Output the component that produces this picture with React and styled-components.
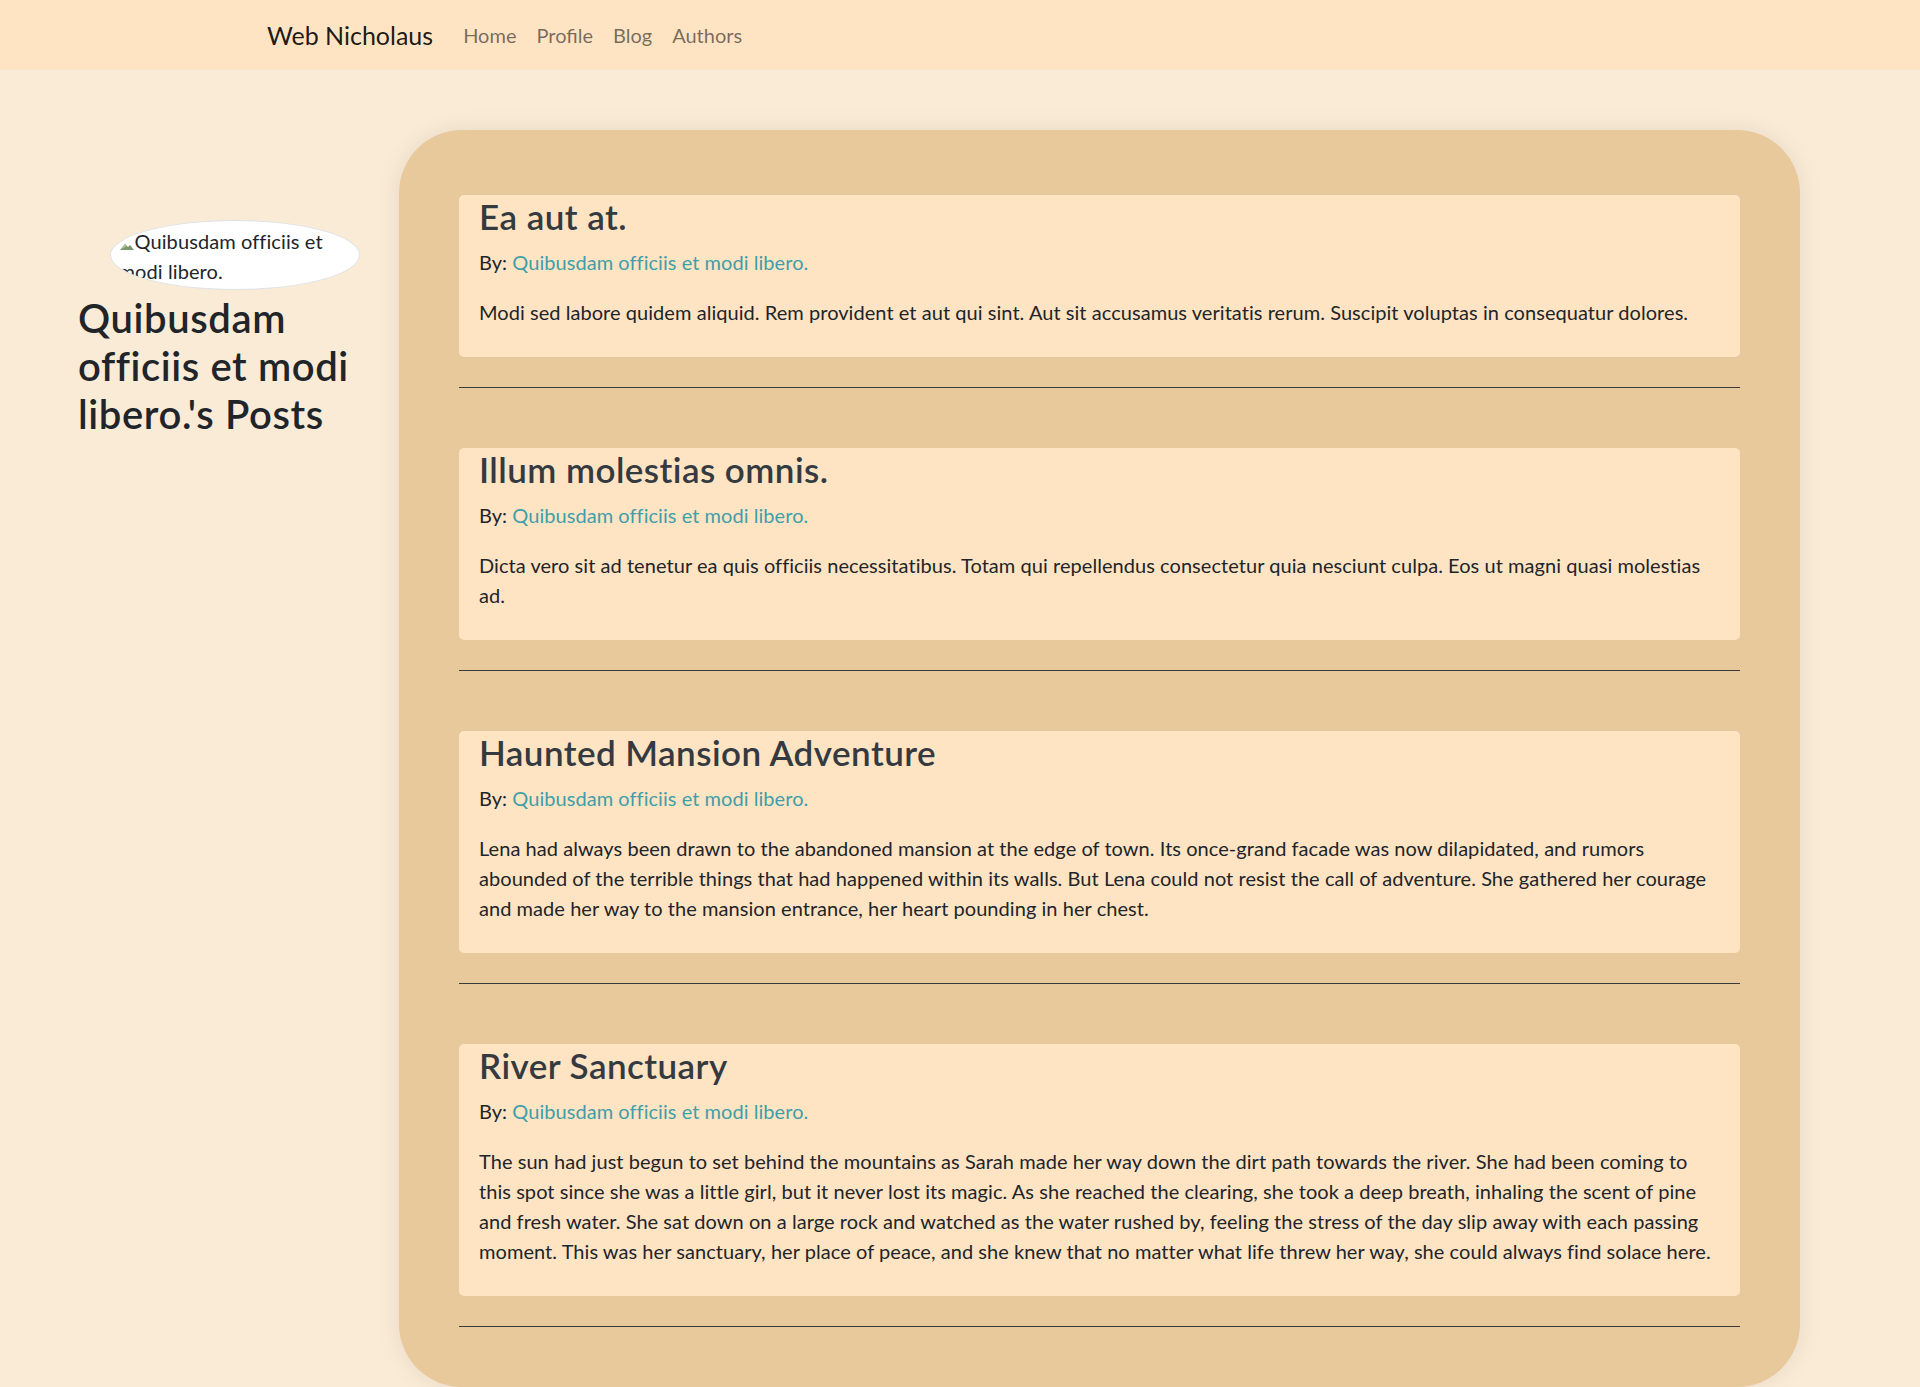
import styled, { createGlobalStyle } from "styled-components";

const posts = [
  {
    id: 1,
    title: "Ea aut at.",
    body: "Modi sed labore quidem aliquid. Rem provident et aut qui sint. Aut sit accusamus veritatis rerum. Suscipit voluptas in consequatur dolores.",
  },
  {
    id: 2,
    title: "Illum molestias omnis.",
    body: "Dicta vero sit ad tenetur ea quis officiis necessitatibus. Totam qui repellendus consectetur quia nesciunt culpa. Eos ut magni quasi molestias ad.",
  },
  {
    id: 3,
    title: "Haunted Mansion Adventure",
    body: "Lena had always been drawn to the abandoned mansion at the edge of town. Its once-grand facade was now dilapidated, and rumors abounded of the terrible things that had happened within its walls. But Lena could not resist the call of adventure. She gathered her courage and made her way to the mansion entrance, her heart pounding in her chest.",
  },
  {
    id: 4,
    title: "River Sanctuary",
    body: "The sun had just begun to set behind the mountains as Sarah made her way down the dirt path towards the river. She had been coming to this spot since she was a little girl, but it never lost its magic. As she reached the clearing, she took a deep breath, inhaling the scent of pine and fresh water. She sat down on a large rock and watched as the water rushed by, feeling the stress of the day slip away with each passing moment. This was her sanctuary, her place of peace, and she knew that no matter what life threw her way, she could always find solace here.",
  },
];

const author = "Quibusdam officiis et modi libero.";

export default function App() {
  return (
    <>
      <GlobalStyle />
      <Navbar>
        <Brand href="#">Web Nicholaus</Brand>
        <NavLink href="#">Home</NavLink>
        <NavLink href="#">Profile</NavLink>
        <NavLink href="#">Blog</NavLink>
        <NavLink href="#">Authors</NavLink>
      </Navbar>

      <Main>
        {/* autor */}
        <Sidebar>
          <Avatar>
            <BrokenIcon viewBox="0 0 16 16">
              <path d="M1 15 L6 9 L9 12 L11 10 L15 15 Z" fill="#7a9a6a" />
              <path d="M1 15 L6 9 L8 11 Z" fill="#a9c29a" />
            </BrokenIcon>
            {author}
          </Avatar>
          <AuthorTitle>{author}'s Posts</AuthorTitle>
        </Sidebar>

        {/* posts */}
        <Panel>
          {posts.map((post) => (
            <div key={post.id}>
              <Card>
                <PostTitle>{post.title}</PostTitle>
                <ByLine>
                  By: <AuthorLink href="#">{author}</AuthorLink>
                </ByLine>
                <Body>{post.body}</Body>
              </Card>
              <Divider />
            </div>
          ))}
        </Panel>
      </Main>
    </>
  );
}

const GlobalStyle = createGlobalStyle`
  body {
    margin: 0;
    background-color: #faebd7;
    color: #212529;
    font-family: Lato, "Open Sans", sans-serif;
    font-size: 20px;
    line-height: 30px;
  }
`;

const Navbar = styled.nav`
  display: flex;
  align-items: center;
  height: 70px;
  padding-left: 267px;
  background-color: #ffe4c4;
`;
const Brand = styled.a`
  margin-right: 20px;
  font-size: 25px;
  color: rgba(0, 0, 0, 0.9);
  text-decoration: none;
`;
const NavLink = styled.a`
  padding: 0 10px;
  font-size: 20px;
  color: rgba(0, 0, 0, 0.55);
  text-decoration: none;
`;

const Main = styled.div`
  display: flex;
  align-items: flex-start;
  padding-top: 60px;
`;
const Sidebar = styled.aside`
  width: 313px;
  padding: 90px 8px 0 78px;
  flex-shrink: 0;
  display: flex;
  flex-direction: column;
  align-items: center;
`;
const Avatar = styled.div`
  box-sizing: border-box;
  width: 250px;
  height: 70px;
  padding: 5px 8px 0 8px;
  background-color: #fff;
  border: 1px solid #dee2e6;
  border-radius: 50%;
  overflow: hidden;
  font-size: 20px;
  line-height: 30px;
  letter-spacing: 0.1px;
  color: #212529;
`;
const BrokenIcon = styled.svg`
  width: 16px;
  height: 16px;
  vertical-align: -2px;
`;
const AuthorTitle = styled.h2`
  align-self: stretch;
  margin: 4px 0 0;
  font-size: 40px;
  font-weight: 600;
  line-height: 48px;
  letter-spacing: 0.6px;
`;

const Panel = styled.section`
  box-sizing: border-box;
  width: 1401px;
  padding: 65px 60px 0;
  background-color: #e8c99b;
  border-radius: 63px;
  box-shadow: 0 0 24px rgba(0, 0, 0, 0.08);
`;
const Card = styled.div`
  padding: 0 20px 10px;
  background-color: #ffe4c4;
  border-radius: 5px;
  letter-spacing: 0.05px;
`;
const PostTitle = styled.h3`
  margin: 0 0 10px;
  font-size: 35px;
  font-weight: 600;
  line-height: 42px;
  letter-spacing: 0.45px;
  color: #343a40;
`;
const ByLine = styled.p`
  margin: 0 0 20px;
`;
const AuthorLink = styled.a`
  color: #3f9ea9;
  text-decoration: none;
`;
const Body = styled.p`
  margin: 0 0 20px;
`;
const Divider = styled.hr`
  margin: 30px 0 60px;
  border: 0;
  border-top: 1px solid #3a3a3a;
`;
